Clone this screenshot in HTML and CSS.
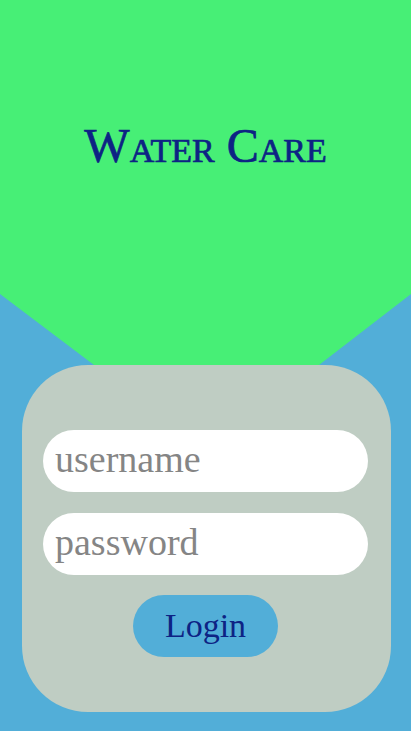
FILE: index.html
```html
<!DOCTYPE html>
<html lang="en">
<head>
<meta charset="utf-8">
<title>Water Care</title>
<link rel="stylesheet" href="styles.css">
</head>
<body>
<div class="page">
  <header class="hero">
    <h1 class="title">Water Care</h1>
  </header>
  <form class="card">
    <input class="field" type="text" placeholder="username">
    <input class="field" type="password" placeholder="password">
    <button class="login" type="button">Login</button>
  </form>
</div>
</body>
</html>
```
FILE: styles.css
```css
html, body {
  margin: 0;
  padding: 0;
}
body {
  background: #52aed8;
  font-family: "Liberation Serif", serif;
}
.page {
  width: 411px;
  height: 731px;
  overflow: hidden;
}
.hero {
  height: 365px;
  background: #47ef76;
  clip-path: polygon(0 0, 100% 0, 100% 294px, 319px 365px, 94px 365px, 0 294px);
  display: flex;
  justify-content: center;
  padding-top: 119px;
  box-sizing: border-box;
}
.title {
  margin: 0;
  font-size: 48px;
  font-weight: normal;
  -webkit-text-stroke: 0.7px #0d2384;
  font-variant: small-caps;
  color: #0d2384;
  line-height: 54px;
}
.card {
  margin: 0 20px 0 22px;
  height: 347px;
  box-sizing: border-box;
  background: #bfcdc3;
  border-radius: 66px;
  padding: 65px 23px 0 21px;
  display: flex;
  flex-direction: column;
  align-items: center;
  gap: 21px;
}
.field {
  width: 100%;
  height: 62px;
  box-sizing: border-box;
  border: none;
  outline: none;
  border-radius: 31px;
  background: #ffffff;
  padding: 0 12px 4px;
  font-family: "Liberation Serif", serif;
  font-size: 38px;
  color: #333;
}
.field::placeholder {
  color: #858585;
}
.login {
  margin-top: -1px;
  width: 145px;
  height: 62px;
  border: none;
  border-radius: 31px;
  background: #52aed8;
  color: #0d2384;
  font-family: "Liberation Serif", serif;
  font-size: 34px;
  padding: 0;
}
```
